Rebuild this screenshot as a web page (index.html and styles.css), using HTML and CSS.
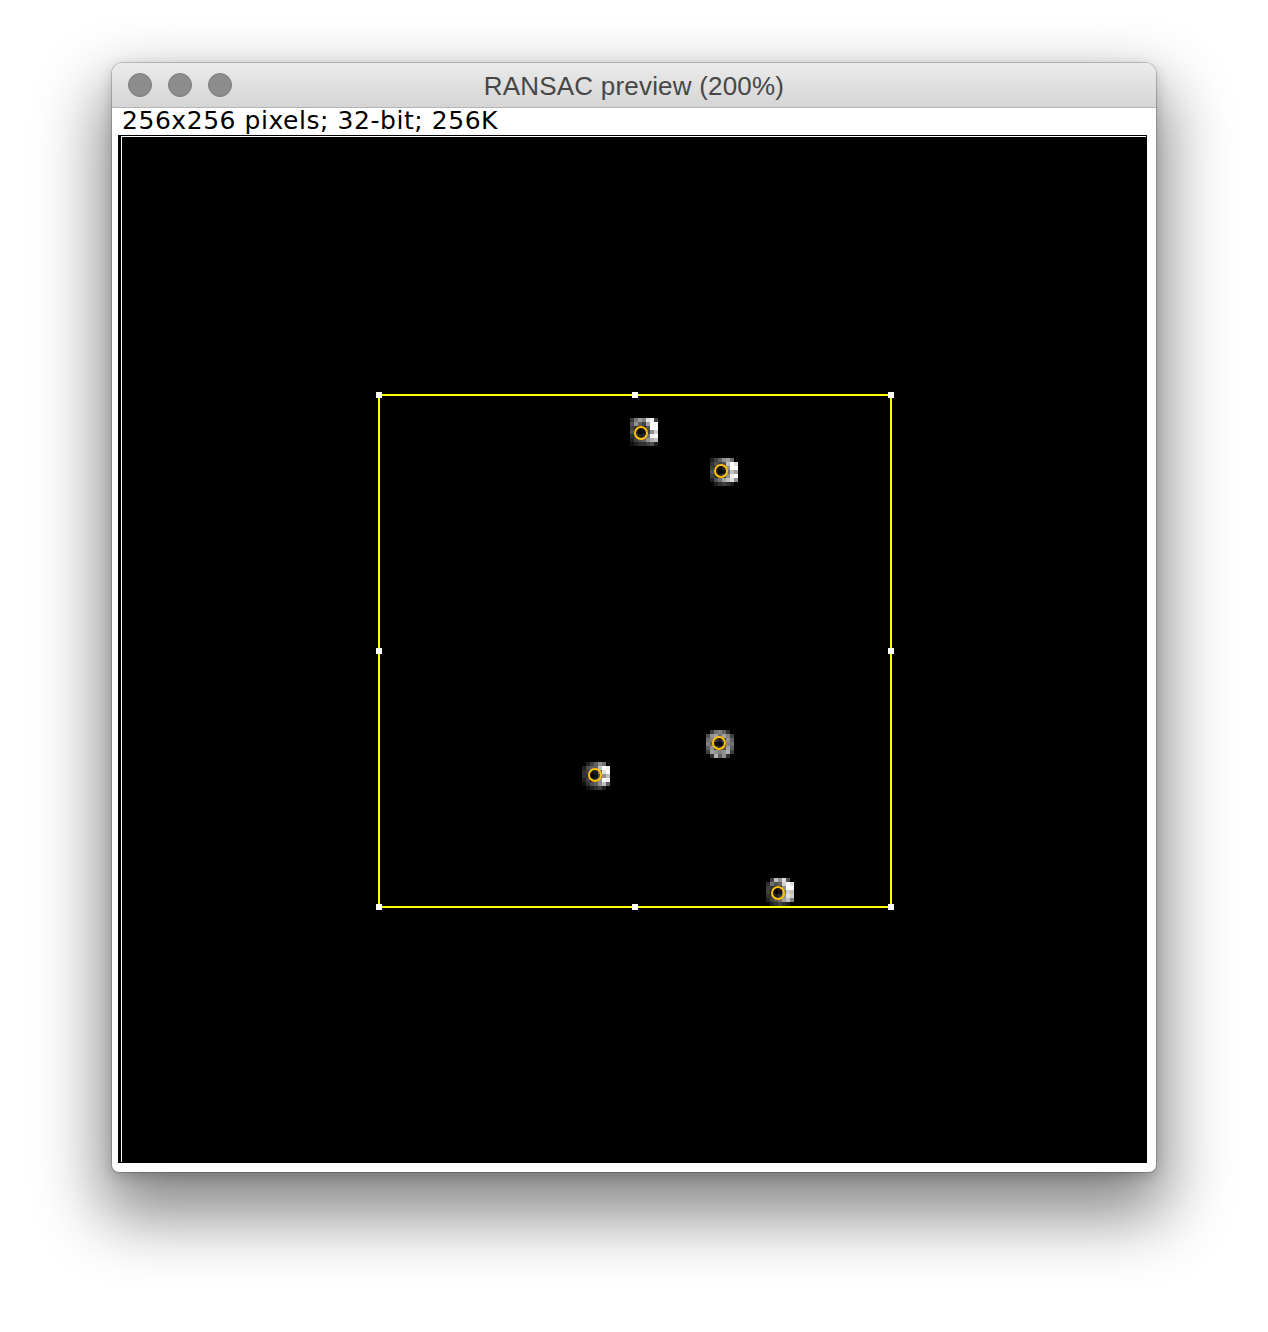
FILE: index.html
```html
<!DOCTYPE html>
<html>
<head>
<meta charset="utf-8">
<title>RANSAC preview (200%)</title>
<link rel="stylesheet" href="styles.css">
</head>
<body>
<div class="window">
  <div class="titlebar">
    <div class="lights">
      <span class="light"></span><span class="light"></span><span class="light"></span>
    </div>
    <div class="title">RANSAC preview (200%)</div>
  </div>
  <div class="status">256x256 pixels; 32-bit; 256K</div>
  <div class="frame">
    <div class="frame-inner">
      <div class="image">
        <svg class="overlay" width="1025" height="1026" viewBox="122 137 1025 1026" shape-rendering="crispEdges">
          <!-- blob 1 -->
          <g transform="translate(630 418)">
            <rect x="0" y="0" width="4" height="4" fill="#3a3a3a"/><rect x="4" y="0" width="4" height="4" fill="#777"/><rect x="8" y="0" width="4" height="4" fill="#9a9a9a"/><rect x="12" y="0" width="4" height="4" fill="#808080"/><rect x="16" y="0" width="4" height="4" fill="#e0e0e0"/><rect x="20" y="0" width="4" height="4" fill="#f0f0f0"/><rect x="24" y="0" width="4" height="4" fill="#404040"/>
            <rect x="0" y="4" width="4" height="4" fill="#505050"/><rect x="4" y="4" width="4" height="4" fill="#909090"/><rect x="8" y="4" width="4" height="4" fill="#606060"/><rect x="12" y="4" width="4" height="4" fill="#404040"/><rect x="16" y="4" width="4" height="4" fill="#a0a0a0"/><rect x="20" y="4" width="4" height="4" fill="#fff"/><rect x="24" y="4" width="4" height="4" fill="#fff"/>
            <rect x="0" y="8" width="4" height="4" fill="#404040"/><rect x="4" y="8" width="4" height="4" fill="#303030"/><rect x="8" y="8" width="4" height="4" fill="#101010"/><rect x="12" y="8" width="4" height="4" fill="#101010"/><rect x="16" y="8" width="4" height="4" fill="#505050"/><rect x="20" y="8" width="4" height="4" fill="#fff"/><rect x="24" y="8" width="4" height="4" fill="#fff"/>
            <rect x="0" y="12" width="4" height="4" fill="#505050"/><rect x="4" y="12" width="4" height="4" fill="#202020"/><rect x="12" y="12" width="4" height="4" fill="#101010"/><rect x="16" y="12" width="4" height="4" fill="#404040"/><rect x="20" y="12" width="4" height="4" fill="#909090"/><rect x="24" y="12" width="4" height="4" fill="#d0d0d0"/>
            <rect x="0" y="16" width="4" height="4" fill="#303030"/><rect x="4" y="16" width="4" height="4" fill="#303030"/><rect x="8" y="16" width="4" height="4" fill="#202020"/><rect x="12" y="16" width="4" height="4" fill="#202020"/><rect x="16" y="16" width="4" height="4" fill="#707070"/><rect x="20" y="16" width="4" height="4" fill="#f0f0f0"/><rect x="24" y="16" width="4" height="4" fill="#fff"/>
            <rect x="0" y="20" width="4" height="4" fill="#202020"/><rect x="4" y="20" width="4" height="4" fill="#404040"/><rect x="8" y="20" width="4" height="4" fill="#505050"/><rect x="12" y="20" width="4" height="4" fill="#606060"/><rect x="16" y="20" width="4" height="4" fill="#909090"/><rect x="20" y="20" width="4" height="4" fill="#b0b0b0"/><rect x="24" y="20" width="4" height="4" fill="#c0c0c0"/>
            <rect x="0" y="24" width="4" height="4" fill="#101010"/><rect x="4" y="24" width="4" height="4" fill="#202020"/><rect x="8" y="24" width="4" height="4" fill="#303030"/><rect x="12" y="24" width="4" height="4" fill="#303030"/><rect x="16" y="24" width="4" height="4" fill="#404040"/><rect x="20" y="24" width="4" height="4" fill="#505050"/><rect x="24" y="24" width="4" height="4" fill="#202020"/>
          </g>
          <!-- blob 2 -->
          <g transform="translate(710 458)">
            <rect x="0" y="0" width="4" height="4" fill="#202020"/><rect x="4" y="0" width="4" height="4" fill="#404040"/><rect x="8" y="0" width="4" height="4" fill="#606060"/><rect x="12" y="0" width="4" height="4" fill="#909090"/><rect x="16" y="0" width="4" height="4" fill="#a0a0a0"/><rect x="20" y="0" width="4" height="4" fill="#707070"/>
            <rect x="0" y="4" width="4" height="4" fill="#303030"/><rect x="4" y="4" width="4" height="4" fill="#505050"/><rect x="8" y="4" width="4" height="4" fill="#404040"/><rect x="12" y="4" width="4" height="4" fill="#505050"/><rect x="16" y="4" width="4" height="4" fill="#c0c0c0"/><rect x="20" y="4" width="4" height="4" fill="#fff"/><rect x="24" y="4" width="4" height="4" fill="#e0e0e0"/>
            <rect x="0" y="8" width="4" height="4" fill="#404040"/><rect x="4" y="8" width="4" height="4" fill="#202020"/><rect x="8" y="8" width="4" height="4" fill="#101010"/><rect x="12" y="8" width="4" height="4" fill="#202020"/><rect x="16" y="8" width="4" height="4" fill="#909090"/><rect x="20" y="8" width="4" height="4" fill="#fff"/><rect x="24" y="8" width="4" height="4" fill="#fff"/>
            <rect x="0" y="12" width="4" height="4" fill="#505050"/><rect x="4" y="12" width="4" height="4" fill="#202020"/><rect x="12" y="12" width="4" height="4" fill="#101010"/><rect x="16" y="12" width="4" height="4" fill="#707070"/><rect x="20" y="12" width="4" height="4" fill="#c0c0c0"/><rect x="24" y="12" width="4" height="4" fill="#a0a0a0"/>
            <rect x="0" y="16" width="4" height="4" fill="#404040"/><rect x="4" y="16" width="4" height="4" fill="#303030"/><rect x="8" y="16" width="4" height="4" fill="#202020"/><rect x="12" y="16" width="4" height="4" fill="#404040"/><rect x="16" y="16" width="4" height="4" fill="#909090"/><rect x="20" y="16" width="4" height="4" fill="#f0f0f0"/><rect x="24" y="16" width="4" height="4" fill="#fff"/>
            <rect x="0" y="20" width="4" height="4" fill="#202020"/><rect x="4" y="20" width="4" height="4" fill="#505050"/><rect x="8" y="20" width="4" height="4" fill="#707070"/><rect x="12" y="20" width="4" height="4" fill="#a0a0a0"/><rect x="16" y="20" width="4" height="4" fill="#c0c0c0"/><rect x="20" y="20" width="4" height="4" fill="#e0e0e0"/><rect x="24" y="20" width="4" height="4" fill="#909090"/>
            <rect x="4" y="24" width="4" height="4" fill="#202020"/><rect x="8" y="24" width="4" height="4" fill="#303030"/><rect x="12" y="24" width="4" height="4" fill="#404040"/><rect x="16" y="24" width="4" height="4" fill="#303030"/><rect x="20" y="24" width="4" height="4" fill="#202020"/>
          </g>
          <!-- blob 3 -->
          <g transform="translate(706 730)">
            <rect x="4" y="0" width="4" height="4" fill="#404040"/><rect x="8" y="0" width="4" height="4" fill="#707070"/><rect x="12" y="0" width="4" height="4" fill="#808080"/><rect x="16" y="0" width="4" height="4" fill="#606060"/><rect x="20" y="0" width="4" height="4" fill="#303030"/>
            <rect x="0" y="4" width="4" height="4" fill="#505050"/><rect x="4" y="4" width="4" height="4" fill="#909090"/><rect x="8" y="4" width="4" height="4" fill="#a0a0a0"/><rect x="12" y="4" width="4" height="4" fill="#707070"/><rect x="16" y="4" width="4" height="4" fill="#a0a0a0"/><rect x="20" y="4" width="4" height="4" fill="#808080"/><rect x="24" y="4" width="4" height="4" fill="#404040"/>
            <rect x="0" y="8" width="4" height="4" fill="#707070"/><rect x="4" y="8" width="4" height="4" fill="#808080"/><rect x="8" y="8" width="4" height="4" fill="#303030"/><rect x="12" y="8" width="4" height="4" fill="#202020"/><rect x="16" y="8" width="4" height="4" fill="#404040"/><rect x="20" y="8" width="4" height="4" fill="#909090"/><rect x="24" y="8" width="4" height="4" fill="#606060"/>
            <rect x="0" y="12" width="4" height="4" fill="#808080"/><rect x="4" y="12" width="4" height="4" fill="#606060"/><rect x="8" y="12" width="4" height="4" fill="#101010"/><rect x="16" y="12" width="4" height="4" fill="#202020"/><rect x="20" y="12" width="4" height="4" fill="#808080"/><rect x="24" y="12" width="4" height="4" fill="#707070"/>
            <rect x="0" y="16" width="4" height="4" fill="#606060"/><rect x="4" y="16" width="4" height="4" fill="#909090"/><rect x="8" y="16" width="4" height="4" fill="#404040"/><rect x="12" y="16" width="4" height="4" fill="#303030"/><rect x="16" y="16" width="4" height="4" fill="#505050"/><rect x="20" y="16" width="4" height="4" fill="#a0a0a0"/><rect x="24" y="16" width="4" height="4" fill="#606060"/>
            <rect x="0" y="20" width="4" height="4" fill="#404040"/><rect x="4" y="20" width="4" height="4" fill="#a0a0a0"/><rect x="8" y="20" width="4" height="4" fill="#909090"/><rect x="12" y="20" width="4" height="4" fill="#808080"/><rect x="16" y="20" width="4" height="4" fill="#909090"/><rect x="20" y="20" width="4" height="4" fill="#b0b0b0"/><rect x="24" y="20" width="4" height="4" fill="#404040"/>
            <rect x="4" y="24" width="4" height="4" fill="#303030"/><rect x="8" y="24" width="4" height="4" fill="#b0b0b0"/><rect x="12" y="24" width="4" height="4" fill="#606060"/><rect x="16" y="24" width="4" height="4" fill="#909090"/><rect x="20" y="24" width="4" height="4" fill="#303030"/>
          </g>
          <!-- blob 4 -->
          <g transform="translate(582 762)">
            <rect x="4" y="0" width="4" height="4" fill="#202020"/><rect x="8" y="0" width="4" height="4" fill="#404040"/><rect x="12" y="0" width="4" height="4" fill="#606060"/><rect x="16" y="0" width="4" height="4" fill="#909090"/><rect x="20" y="0" width="4" height="4" fill="#707070"/>
            <rect x="0" y="4" width="4" height="4" fill="#202020"/><rect x="4" y="4" width="4" height="4" fill="#505050"/><rect x="8" y="4" width="4" height="4" fill="#606060"/><rect x="12" y="4" width="4" height="4" fill="#606060"/><rect x="16" y="4" width="4" height="4" fill="#c0c0c0"/><rect x="20" y="4" width="4" height="4" fill="#fff"/><rect x="24" y="4" width="4" height="4" fill="#f0f0f0"/>
            <rect x="0" y="8" width="4" height="4" fill="#303030"/><rect x="4" y="8" width="4" height="4" fill="#404040"/><rect x="8" y="8" width="4" height="4" fill="#101010"/><rect x="12" y="8" width="4" height="4" fill="#202020"/><rect x="16" y="8" width="4" height="4" fill="#707070"/><rect x="20" y="8" width="4" height="4" fill="#e0e0e0"/><rect x="24" y="8" width="4" height="4" fill="#fff"/>
            <rect x="0" y="12" width="4" height="4" fill="#303030"/><rect x="4" y="12" width="4" height="4" fill="#303030"/><rect x="12" y="12" width="4" height="4" fill="#101010"/><rect x="16" y="12" width="4" height="4" fill="#505050"/><rect x="20" y="12" width="4" height="4" fill="#909090"/><rect x="24" y="12" width="4" height="4" fill="#c0c0c0"/>
            <rect x="0" y="16" width="4" height="4" fill="#202020"/><rect x="4" y="16" width="4" height="4" fill="#404040"/><rect x="8" y="16" width="4" height="4" fill="#202020"/><rect x="12" y="16" width="4" height="4" fill="#303030"/><rect x="16" y="16" width="4" height="4" fill="#909090"/><rect x="20" y="16" width="4" height="4" fill="#fff"/><rect x="24" y="16" width="4" height="4" fill="#f0f0f0"/>
            <rect x="0" y="20" width="4" height="4" fill="#101010"/><rect x="4" y="20" width="4" height="4" fill="#303030"/><rect x="8" y="20" width="4" height="4" fill="#505050"/><rect x="12" y="20" width="4" height="4" fill="#606060"/><rect x="16" y="20" width="4" height="4" fill="#909090"/><rect x="20" y="20" width="4" height="4" fill="#c0c0c0"/><rect x="24" y="20" width="4" height="4" fill="#606060"/>
            <rect x="4" y="24" width="4" height="4" fill="#101010"/><rect x="8" y="24" width="4" height="4" fill="#202020"/><rect x="12" y="24" width="4" height="4" fill="#303030"/><rect x="16" y="24" width="4" height="4" fill="#404040"/><rect x="20" y="24" width="4" height="4" fill="#202020"/>
          </g>
          <!-- blob 5 -->
          <g transform="translate(766 878)">
            <rect x="4" y="0" width="4" height="4" fill="#404040"/><rect x="8" y="0" width="4" height="4" fill="#c0c0c0"/><rect x="12" y="0" width="4" height="4" fill="#909090"/><rect x="16" y="0" width="4" height="4" fill="#e0e0e0"/><rect x="20" y="0" width="4" height="4" fill="#505050"/>
            <rect x="0" y="4" width="4" height="4" fill="#303030"/><rect x="4" y="4" width="4" height="4" fill="#707070"/><rect x="8" y="4" width="4" height="4" fill="#505050"/><rect x="12" y="4" width="4" height="4" fill="#606060"/><rect x="16" y="4" width="4" height="4" fill="#d0d0d0"/><rect x="20" y="4" width="4" height="4" fill="#fff"/><rect x="24" y="4" width="4" height="4" fill="#e0e0e0"/>
            <rect x="0" y="8" width="4" height="4" fill="#404040"/><rect x="4" y="8" width="4" height="4" fill="#303030"/><rect x="8" y="8" width="4" height="4" fill="#101010"/><rect x="12" y="8" width="4" height="4" fill="#202020"/><rect x="16" y="8" width="4" height="4" fill="#909090"/><rect x="20" y="8" width="4" height="4" fill="#fff"/><rect x="24" y="8" width="4" height="4" fill="#fff"/>
            <rect x="0" y="12" width="4" height="4" fill="#404040"/><rect x="4" y="12" width="4" height="4" fill="#202020"/><rect x="12" y="12" width="4" height="4" fill="#101010"/><rect x="16" y="12" width="4" height="4" fill="#707070"/><rect x="20" y="12" width="4" height="4" fill="#d0d0d0"/><rect x="24" y="12" width="4" height="4" fill="#c0c0c0"/>
            <rect x="0" y="16" width="4" height="4" fill="#303030"/><rect x="4" y="16" width="4" height="4" fill="#303030"/><rect x="8" y="16" width="4" height="4" fill="#202020"/><rect x="12" y="16" width="4" height="4" fill="#303030"/><rect x="16" y="16" width="4" height="4" fill="#909090"/><rect x="20" y="16" width="4" height="4" fill="#e0e0e0"/><rect x="24" y="16" width="4" height="4" fill="#d0d0d0"/>
            <rect x="0" y="20" width="4" height="4" fill="#202020"/><rect x="4" y="20" width="4" height="4" fill="#404040"/><rect x="8" y="20" width="4" height="4" fill="#505050"/><rect x="12" y="20" width="4" height="4" fill="#707070"/><rect x="16" y="20" width="4" height="4" fill="#a0a0a0"/><rect x="20" y="20" width="4" height="4" fill="#c0c0c0"/><rect x="24" y="20" width="4" height="4" fill="#808080"/>
            <rect x="4" y="24" width="4" height="4" fill="#202020"/><rect x="8" y="24" width="4" height="4" fill="#303030"/><rect x="12" y="24" width="4" height="4" fill="#404040"/><rect x="16" y="24" width="4" height="4" fill="#303030"/><rect x="20" y="24" width="4" height="4" fill="#202020"/>
          </g>
          <!-- ROI -->
          <rect x="379" y="395" width="512" height="512" fill="none" stroke="#ffff00" stroke-width="2"/>
          <g fill="#fff">
            <rect x="376" y="392" width="6" height="6"/><rect x="632" y="392" width="6" height="6"/><rect x="888" y="392" width="6" height="6"/>
            <rect x="376" y="648" width="6" height="6"/><rect x="888" y="648" width="6" height="6"/>
            <rect x="376" y="904" width="6" height="6"/><rect x="632" y="904" width="6" height="6"/><rect x="888" y="904" width="6" height="6"/>
          </g>
          <!-- detections -->
          <g fill="none" stroke="#ffc000" stroke-width="2" shape-rendering="geometricPrecision">
            <circle cx="641" cy="433" r="6"/>
            <circle cx="721" cy="471" r="6"/>
            <circle cx="719" cy="743" r="6"/>
            <circle cx="595" cy="775" r="6"/>
            <circle cx="778" cy="893" r="6"/>
          </g>
        </svg>
      </div>
    </div>
  </div>
</div>
</body>
</html>
```

FILE: styles.css
```css
html, body {
  margin: 0;
  padding: 0;
  background: #ffffff;
}

body {
  width: 1268px;
  height: 1332px;
  overflow: hidden;
}

.window {
  margin: 63px 0 0 112px;
  width: 1044px;
  height: 1109px;
  background: #ffffff;
  border-radius: 11px 11px 7px 7px;
  overflow: hidden;
  box-shadow: 0 0 0 1px rgba(0, 0, 0, 0.18), 0 34px 66px 10px rgba(0, 0, 0, 0.47), 0 4px 14px rgba(0, 0, 0, 0.2);
  display: flex;
  flex-direction: column;
}

.titlebar {
  height: 44px;
  flex: none;
  background: linear-gradient(#ebebeb, #d5d5d5);
  border-bottom: 1px solid #b5b5b5;
  display: flex;
  align-items: center;
  position: relative;
}

.lights {
  display: flex;
  gap: 16px;
  padding-left: 16px;
}

.light {
  width: 22px;
  height: 22px;
  border-radius: 50%;
  background: #8d8d8d;
  border: 1px solid #7c7c7c;
}

.title {
  position: absolute;
  left: 0;
  right: 0;
  top: 0;
  height: 44px;
  line-height: 47px;
  text-align: center;
  font-family: "Liberation Sans", Arial, sans-serif;
  font-size: 26px;
  letter-spacing: 0.2px;
  color: #474747;
}

.status {
  height: 27px;
  flex: none;
  padding-left: 10px;
  font-family: "DejaVu Sans", sans-serif;
  font-size: 25px;
  letter-spacing: 0.55px;
  line-height: 25px;
  color: #000000;
  white-space: nowrap;
}

.frame {
  margin-left: 6px;
  width: 1026px;
  height: 1027px;
  border-top: 1px solid #000;
  border-left: 3px solid #000;
  background: #000;
}

.frame-inner {
  width: 1025px;
  height: 1026px;
  border-top: 1px solid #fff;
  border-left: 1px solid #fff;
  box-sizing: border-box;
}

.image {
  width: 1025px;
  height: 1026px;
  background: #000;
}

.overlay {
  display: block;
}
```
